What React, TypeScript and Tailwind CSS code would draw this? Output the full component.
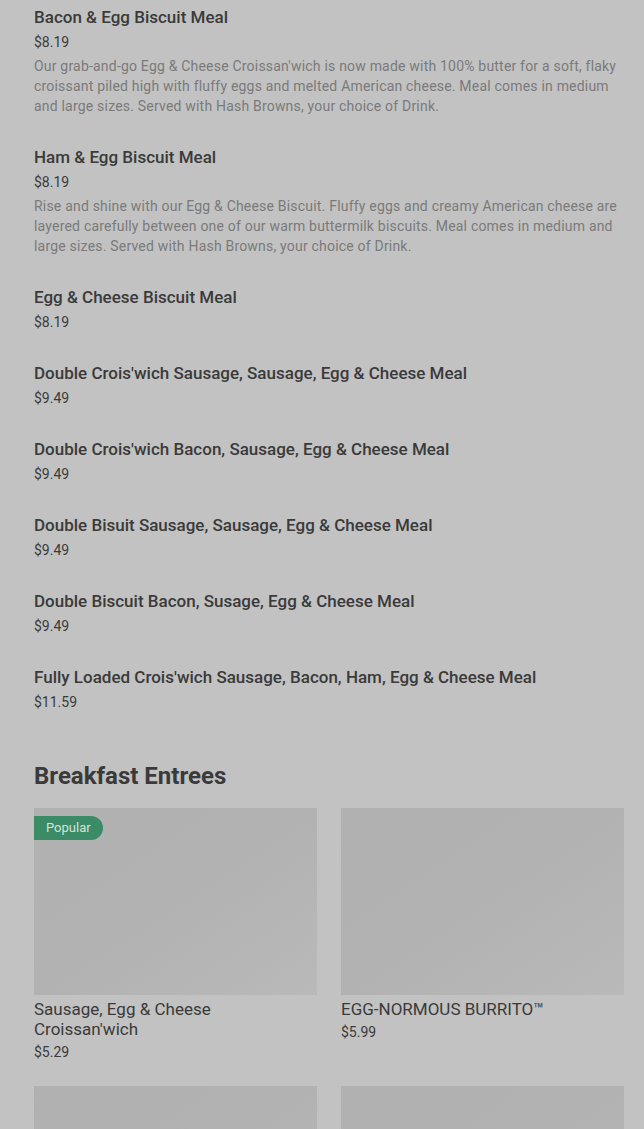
import React from "react";

type Item = { name: string; price: string; desc?: string };

const items: Item[] = [
  {
    name: "Bacon & Egg Biscuit Meal",
    price: "$8.19",
    desc: "Our grab-and-go Egg & Cheese Croissan'wich is now made with 100% butter for a soft, flaky croissant piled high with fluffy eggs and melted American cheese. Meal comes in medium and large sizes. Served with Hash Browns, your choice of Drink.",
  },
  {
    name: "Ham & Egg Biscuit Meal",
    price: "$8.19",
    desc: "Rise and shine with our Egg & Cheese Biscuit. Fluffy eggs and creamy American cheese are layered carefully between one of our warm buttermilk biscuits. Meal comes in medium and large sizes. Served with Hash Browns, your choice of Drink.",
  },
  { name: "Egg & Cheese Biscuit Meal", price: "$8.19" },
  { name: "Double Crois'wich Sausage, Sausage, Egg & Cheese Meal", price: "$9.49" },
  { name: "Double Crois'wich Bacon, Sausage, Egg & Cheese Meal", price: "$9.49" },
  { name: "Double Bisuit Sausage, Sausage, Egg & Cheese Meal", price: "$9.49" },
  { name: "Double Biscuit Bacon, Susage, Egg & Cheese Meal", price: "$9.49" },
  { name: "Fully Loaded Crois'wich Sausage, Bacon, Ham, Egg & Cheese Meal", price: "$11.59" },
];

type Card = { name: string; price?: string; popular?: boolean };
const cards: Card[] = [
  { name: "Sausage, Egg & Cheese Croissan'wich", price: "$5.29", popular: true },
  { name: "EGG-NORMOUS BURRITO™", price: "$5.99" },
  { name: "" },
  { name: "" },
];

export default function App() {
  return (
    <div
      className="min-h-[1129px] w-full bg-[#c2c2c2] pl-[34px] pr-[20px] pt-[5px] text-[#3a3a3a]"
      style={{ fontFamily: "Roboto, 'Liberation Sans', sans-serif" }}
    >
      <div className="flex flex-col">
        {items.map((it, i) => (
          <div key={i} className="flex flex-col pb-[29px]">
            <div className="text-[17px] font-medium leading-[24px] text-[#3a3a3a]">{it.name}</div>
            <div className="mt-[3px] text-[14px] leading-[20px] text-[#3a3a3a]">{it.price}</div>
            {it.desc && (
              <div className="mt-[4px] pr-[4px] text-[14px] leading-[20px] tracking-[0.2px] text-[#7a7a7a]">
                {it.desc}
              </div>
            )}
          </div>
        ))}
      </div>
      <h2 className="mt-[19px] text-[24px] font-bold leading-[32px] text-[#3a3a3a]">
        Breakfast Entrees
      </h2>
      <div className="mt-[16px] grid grid-cols-2 gap-x-[24px] gap-y-[24px]">
        {cards.map((c, i) => (
          <div key={i} className="flex flex-col">
            <div className="relative h-[187px] w-full bg-gradient-to-br from-[#b1b1b1] via-[#b2b2b2] to-[#b9b9b9]">
              {c.popular && (
                <div className="absolute left-0 top-[8px] flex h-[24px] items-center rounded-r-full bg-[#3b8b67] pl-[12px] pr-[12px] text-[13px] text-[#d3e3da]">
                  Popular
                </div>
              )}
            </div>
            {c.name && (
              <div className="mt-[4px] text-[17px] leading-[20px] text-[#3a3a3a]">{c.name}</div>
            )}
            {c.price && (
              <div className="mt-[3px] text-[14px] leading-[20px] text-[#3a3a3a]">{c.price}</div>
            )}
          </div>
        ))}
      </div>
    </div>
  );
}
